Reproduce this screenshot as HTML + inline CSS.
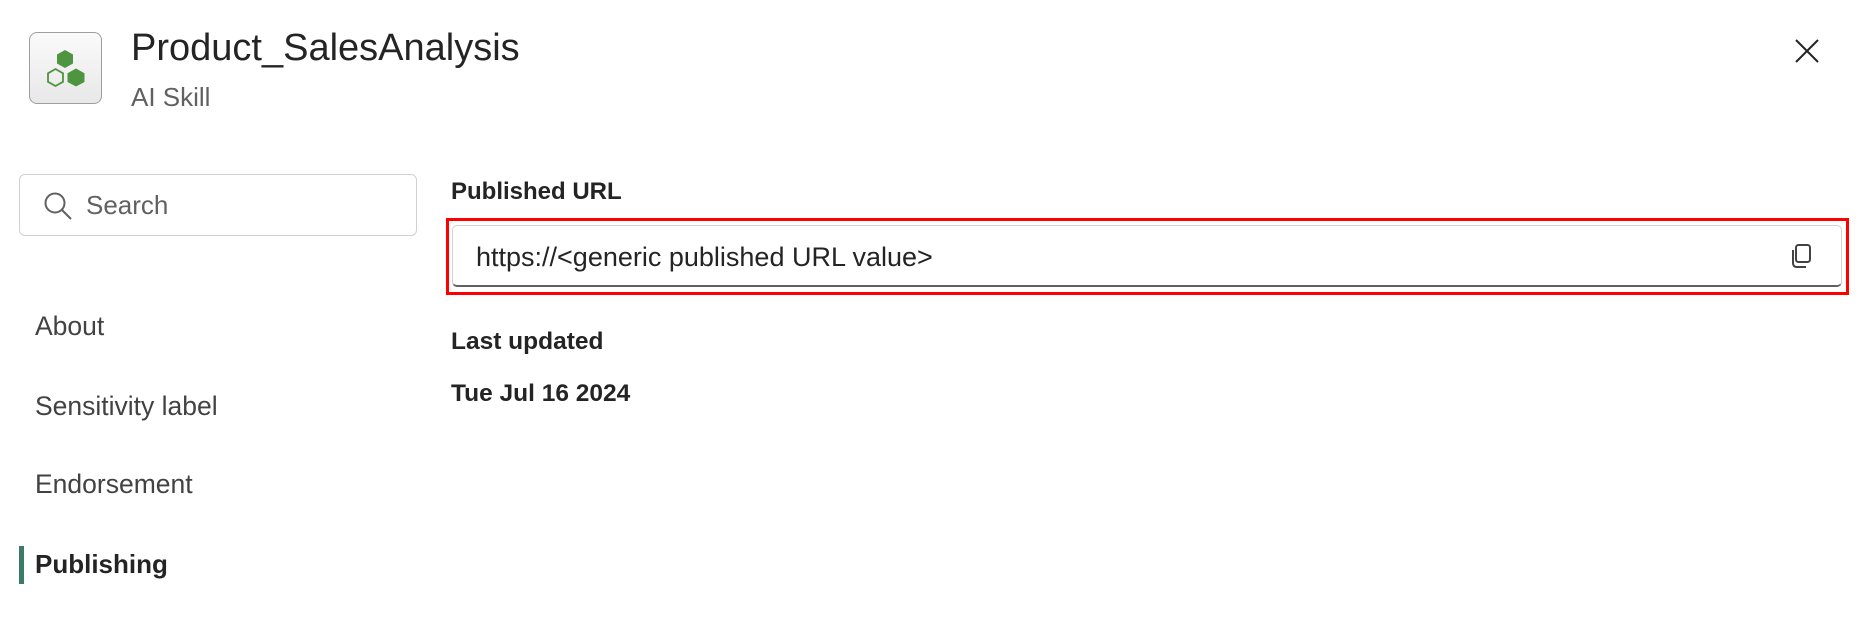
<!DOCTYPE html>
<html><head><meta charset="utf-8"><style>
body{margin:0;width:1870px;height:622px;background:#fff;font-family:"Liberation Sans",sans-serif;position:relative;overflow:hidden;color:#242424}
.a{position:absolute;white-space:nowrap}
</style></head><body>
<div class="a" style="left:29px;top:32px;width:73px;height:72px;border:1px solid #9e9e9e;border-radius:8px;background:linear-gradient(#fafafa,#e8e8e8);box-sizing:border-box"></div>
<svg class="a" style="left:0;top:0" width="120" height="120">
<polygon points="65,50 73,54.5 73,63.5 65,68 57,63.5 57,54.5" fill="#4f9440"/>
<polygon points="55.5,69 63,73.3 63,81.8 55.5,86 48,81.8 48,73.3" fill="none" stroke="#4f9440" stroke-width="1.8"/>
<polygon points="76,68.5 84.5,73.3 84.5,82 76,86.5 67.5,82 67.5,73.3" fill="#4f9440"/>
</svg>
<div class="a" style="left:131px;top:26px;font-size:38px;line-height:44px;color:#242424">Product_SalesAnalysis</div>
<div class="a" style="left:131px;top:82px;font-size:26px;line-height:30px;color:#616161">AI Skill</div>
<svg class="a" style="left:1794px;top:38px" width="26" height="26"><path d="M2 2L24 24M24 2L2 24" stroke="#242424" stroke-width="2"/></svg>
<div class="a" style="left:19px;top:174px;width:398px;height:62px;border:1px solid #d1d1d1;border-radius:6px;box-sizing:border-box"></div>
<svg class="a" style="left:42px;top:190px" width="32" height="32"><circle cx="13" cy="13" r="9.5" fill="none" stroke="#616161" stroke-width="2"/><path d="M20 20L29 29" stroke="#616161" stroke-width="2"/></svg>
<div class="a" style="left:86px;top:190px;font-size:26px;line-height:30px;color:#616161">Search</div>
<div class="a" style="left:35px;top:311px;font-size:26.5px;line-height:30px;color:#424242">About</div>
<div class="a" style="left:35px;top:391px;font-size:26.5px;line-height:30px;color:#424242">Sensitivity label</div>
<div class="a" style="left:35px;top:469px;font-size:26.5px;line-height:30px;color:#424242">Endorsement</div>
<div class="a" style="left:19px;top:546px;width:5px;height:38px;background:#3b7a68"></div>
<div class="a" style="left:35px;top:549px;font-size:26px;line-height:30px;color:#242424;font-weight:bold">Publishing</div>
<div class="a" style="left:451px;top:178px;font-size:24px;line-height:28px;font-weight:bold">Published URL</div>
<div class="a" style="left:446px;top:218px;width:1403px;height:77px;border:3px solid #f00;box-sizing:border-box"></div>
<div class="a" style="left:452px;top:225px;width:1390px;height:62px;border:1px solid #d1d1d1;border-bottom:2px solid #616161;border-radius:5px;box-sizing:border-box"></div>
<div class="a" style="left:476px;top:242px;font-size:27px;line-height:30px;color:#242424">https://&lt;generic published URL value&gt;</div>
<svg class="a" style="left:1789px;top:243px" width="26" height="26"><rect x="7" y="2" width="14" height="17" rx="2.5" fill="none" stroke="#424242" stroke-width="2"/><path d="M4 7V20Q4 24 8 24H17" fill="none" stroke="#424242" stroke-width="2"/></svg>
<div class="a" style="left:451px;top:328px;font-size:24.5px;line-height:28px;font-weight:bold">Last updated</div>
<div class="a" style="left:451px;top:380px;font-size:24.5px;line-height:28px;font-weight:bold">Tue Jul 16 2024</div>
</body></html>
